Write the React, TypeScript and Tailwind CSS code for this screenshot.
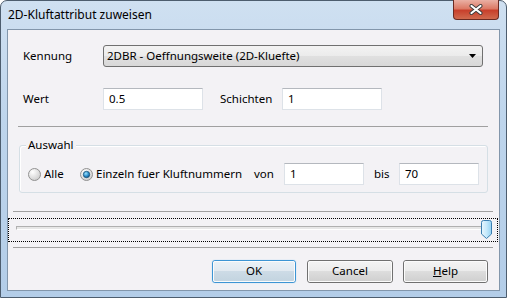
import React from "react";
import clsx from "clsx";

const Field = ({ value, className }: { value: string; className?: string }) => (
  <div
    className={clsx(
      "h-[22px] bg-white border border-[#dde2e8] border-t-[#b4b8be] pl-[5px] flex items-center",
      className
    )}
  >
    {value}
  </div>
);

const Radio = ({ checked, id }: { checked?: boolean; id: string }) => (
  <svg width="13" height="13" viewBox="0 0 13 13" className="shrink-0">
    <defs>
      <radialGradient id={`rb-${id}`} cx="0.35" cy="0.3" r="0.8">
        <stop offset="0" stopColor="#ffffff" />
        <stop offset="1" stopColor="#c9c9c9" />
      </radialGradient>
      <radialGradient id={`rd-${id}`} cx="0.4" cy="0.35" r="0.7">
        <stop offset="0" stopColor="#9de2fc" />
        <stop offset="0.6" stopColor="#2a8ccb" />
        <stop offset="1" stopColor="#0d4f80" />
      </radialGradient>
    </defs>
    <circle cx="6.5" cy="6.5" r="6" fill={`url(#rb-${id})`} stroke="#929292" />
    {checked && <circle cx="6.5" cy="6.5" r="3.2" fill={`url(#rd-${id})`} stroke="#1c5378" strokeWidth="0.8" />}
  </svg>
);

const WinButton = ({ children, def, className }: { children: React.ReactNode; def?: boolean; className?: string }) => (
  <div
    className={clsx(
      "h-[23px] rounded-[3px] border flex",
      def ? "border-[#3d95d4] shadow-[0_0_1px_#7cc4f0]" : "border-[#707070]",
      className
    )}
  >
    <div
      className={clsx(
        "flex-1 rounded-[2px] border border-[#fbfbfb] flex items-center justify-center pb-px",
        def
          ? "bg-[linear-gradient(180deg,#eaf1f6_0%,#e1e9f0_50%,#cddbe6_50%,#c3d4e0_100%)]"
          : "bg-[linear-gradient(180deg,#f3f3f3_0%,#ebebeb_50%,#dddddd_50%,#d0d0d0_100%)]"
      )}
    >
      {children}
    </div>
  </div>
);

const Sep = ({ className }: { className?: string }) => <div className={clsx("h-px bg-[#a0a0a0]", className)} />;

export default function App() {
  return (
    <div className="w-[507px] h-[298px] relative overflow-hidden bg-white text-[12px] text-black font-[family-name:'Noto_Sans',sans-serif]">
      <div className="w-full h-full rounded-t-[7px] border border-[#4d5d6e] bg-[linear-gradient(180deg,#cfe0f1_0%,#bed5ec_40%,#b3cde8_100%)] flex flex-col">
        <div className="h-[28px] pl-[7px] flex items-center pb-[1px]">2D-Kluftattribut zuweisen</div>
        <div className="mx-[6px] h-[262px] border border-[#8296ab] bg-[#f3f2f5] flex flex-col text-[11.5px]">
          {/* Kennung */}
          <div className="mt-[15px] h-[22px] flex items-center pl-[15px]">
            <span className="w-[80px]">Kennung</span>
            <div className="w-[380px] h-[22px] rounded-[3px] border border-[#707070] bg-[linear-gradient(180deg,#f3f3f3_0%,#ebebeb_50%,#e0e0e0_50%,#d8d8d8_100%)] flex items-center pl-[3px] pr-[6px]">
              <span className="flex-1">2DBR - Oeffnungsweite (2D-Kluefte)</span>
              <svg width="7" height="4" viewBox="0 0 7 4">
                <path d="M0 0H7L3.5 4Z" fill="#000" />
              </svg>
            </div>
          </div>
          {/* Wert / Schichten */}
          <div className="mt-[21px] h-[22px] flex items-center pl-[15px]">
            <span className="w-[80px]">Wert</span>
            <Field value="0.5" className="w-[100px]" />
            <span className="ml-[17px] w-[62px]">Schichten</span>
            <Field value="1" className="w-[100px]" />
          </div>
          <Sep className="mt-[16px] ml-[10px] w-[470px]" />
          {/* Auswahl */}
          <div className="mt-[18px] ml-[11px] w-[469px] h-[48px] relative rounded-[3px] border border-[#d5dfe5] shadow-[inset_1px_1px_0_#ffffff]">
            <span className="absolute -top-[10px] left-[6px] px-[2px] bg-[#f3f2f5]">Auswahl</span>
            <div className="mt-[17px] h-[22px] flex items-center pl-[8px]">
              <div className="w-[52px] flex items-center gap-[3px]">
                <Radio id="a" />
                <span>Alle</span>
              </div>
              <div className="w-[174px] flex items-center gap-[3px]">
                <Radio id="b" checked />
                <span>Einzeln fuer Kluftnummern</span>
              </div>
              <span className="w-[30px]">von</span>
              <Field value="1" className="w-[80px]" />
              <span className="ml-[10px] w-[25px]">bis</span>
              <Field value="70" className="w-[80px]" />
            </div>
          </div>
          <Sep className="mt-[18px] ml-[5px] w-[480px]" />
          {/* Slider */}
          <div className="mt-[6px] h-[24px] w-[490px] relative border border-dotted border-black">
            <div className="absolute left-[7px] top-[7px] w-[474px] h-[4px] border border-[#b0b0b0] border-b-white border-r-white bg-[#e7e7e7]" />
            <svg width="11" height="19" viewBox="0 0 11 19" className="absolute left-[472px] top-[1px]">
              <defs>
                <linearGradient id="thumb" x1="0" y1="0" x2="1" y2="0">
                  <stop offset="0" stopColor="#e9f6fd" />
                  <stop offset="0.5" stopColor="#c6e9fb" />
                  <stop offset="1" stopColor="#93d2f3" />
                </linearGradient>
              </defs>
              <path
                d="M0.5 2.5Q0.5 0.5 2.5 0.5H8.5Q10.5 0.5 10.5 2.5V14L5.5 18.5L0.5 14Z"
                fill="url(#thumb)"
                stroke="#3c7fb1"
              />
            </svg>
          </div>
          <Sep className="mt-[5px] ml-[5px] w-[480px]" />
          {/* Buttons */}
          <div className="mt-[12px] flex pl-[204px]">
            <WinButton def className="w-[84px]">
              OK
            </WinButton>
            <WinButton className="ml-[11px] w-[86px]">Cancel</WinButton>
            <WinButton className="ml-[10px] w-[85px]">
              <span>
                <span className="underline">H</span>elp
              </span>
            </WinButton>
          </div>
        </div>
      </div>
      {/* close button */}
      <div className="absolute left-[453px] top-0 w-[46px] h-[20px] rounded-b-[4px] border border-t-0 border-[#6b2a22] bg-[linear-gradient(180deg,#eab0a4_0%,#dc7a66_45%,#c8402c_55%,#d06a4e_100%)] flex items-center justify-center">
        <svg width="14" height="11" viewBox="0 0 14 11">
          <path d="M2.5 2L11.5 9M11.5 2L2.5 9" stroke="#3a3a3a" strokeWidth="4" strokeLinecap="round" />
          <path d="M2.5 2L11.5 9M11.5 2L2.5 9" stroke="#ffffff" strokeWidth="2.2" strokeLinecap="round" />
        </svg>
      </div>
    </div>
  );
}
